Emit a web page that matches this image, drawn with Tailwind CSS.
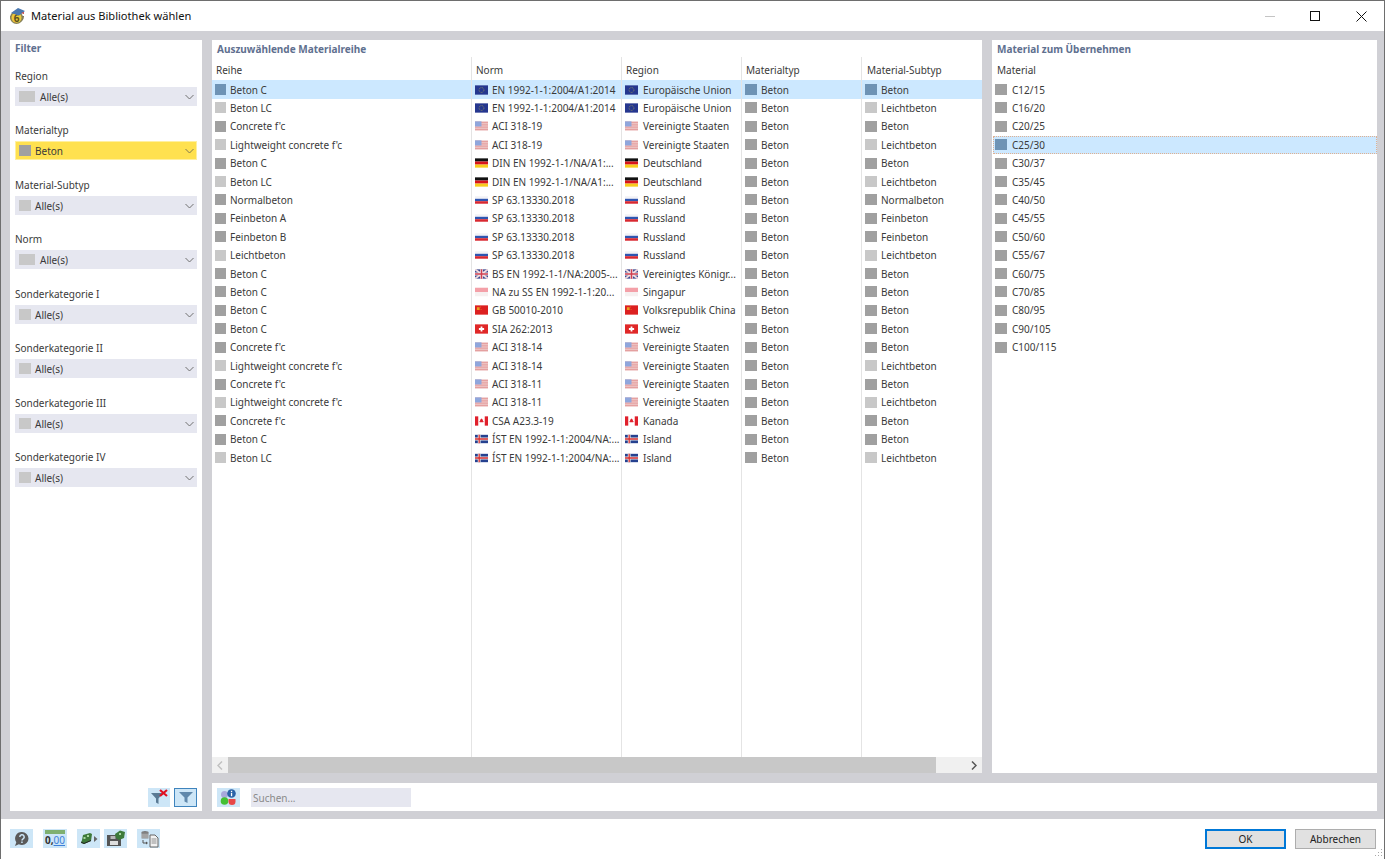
<!DOCTYPE html>
<html lang="de"><head><meta charset="utf-8"><title>Material aus Bibliothek wählen</title>
<script src="https://cdn.jsdelivr.net/npm/@tailwindcss/browser@4"></script></head>
<body class="m-0 bg-white">
<svg width="0" height="0" class="absolute">
<defs>
<symbol id="eu" viewBox="0 0 14 10"><rect width="14" height="10" fill="#26378f"/><circle cx="7" cy="5" r="2.6" fill="none" stroke="#8f9060" stroke-width=".9" stroke-dasharray="1 .8"/></symbol>
<symbol id="us" viewBox="0 0 14 10"><rect width="14" height="10" fill="#f4dcdc"/><path d="M0 1h14M0 3h14M0 5h14M0 7h14M0 9h14" stroke="#e08a8a" stroke-width="1"/><rect width="7" height="5.5" fill="#8fa6dc"/></symbol>
<symbol id="de" viewBox="0 0 14 10"><rect width="14" height="3.4" fill="#111"/><rect y="3.4" width="14" height="3.3" fill="#d8141c"/><rect y="6.7" width="14" height="3.3" fill="#f8cc1c"/></symbol>
<symbol id="ru" viewBox="0 0 14 10"><rect y="1" width="14" height="2.7" fill="#f2f2f6"/><rect y="3.7" width="14" height="2.6" fill="#2e55b0"/><rect y="6.3" width="14" height="2.7" fill="#d82830"/></symbol>
<symbol id="gb" viewBox="0 0 14 10"><rect width="14" height="10" fill="#3c4a90"/><path d="M0 0l14 10M14 0L0 10" stroke="#f0d8dc" stroke-width="2"/><path d="M7 0v10M0 5h14" stroke="#f4f0f0" stroke-width="3"/><path d="M7 0v10M0 5h14" stroke="#d04050" stroke-width="1.6"/></symbol>
<symbol id="sg" viewBox="0 0 14 10"><rect width="14" height="4.6" y=".4" fill="#f4a0a8"/><rect y="5" width="14" height="4.6" fill="#f6f0f0"/></symbol>
<symbol id="cn" viewBox="0 0 14 10"><rect width="14" height="10" fill="#dc2020"/><rect x="2" y="2" width="3" height="3" fill="#e8a020"/><circle cx="6" cy="1.8" r=".5" fill="#e8a020"/><circle cx="6.5" cy="4.5" r=".5" fill="#e8a020"/></symbol>
<symbol id="ch" viewBox="0 0 14 10"><rect width="14" height="10" fill="#e02828"/><path d="M7 2.2v5.6M4.2 5h5.6" stroke="#fff" stroke-width="1.9"/></symbol>
<symbol id="ca" viewBox="0 0 14 10"><rect width="14" height="10" fill="#fff"/><rect width="3.5" height="10" fill="#e0202c"/><rect x="10.5" width="3.5" height="10" fill="#e0202c"/><path d="M7 2l.9 1.6.8-.4-.3 2 1-.2-.5 1.4H5.1l-.5-1.4 1 .2-.3-2 .8.4z" fill="#e0202c"/></symbol>
<symbol id="is" viewBox="0 0 14 10"><rect y=".5" width="14" height="9" fill="#25418f"/><path d="M4.5 .5v9M0 5h14" stroke="#eee" stroke-width="3"/><path d="M4.5 .5v9M0 5h14" stroke="#d83030" stroke-width="1.4"/></symbol>
</defs>
</svg>

<div class="w-[1385px] h-[859px] flex flex-col overflow-hidden border-x border-t border-[#6e6e6e] font-['Noto_Sans','Open_Sans',sans-serif] text-[10px] leading-[18px] text-[#3a3a3a] relative">

<!-- title bar -->
<div class="h-[30px] shrink-0 bg-white flex items-center">
  <svg class="ml-[7px] w-[18px] h-[18px] shrink-0" viewBox="0 0 18 18"><path d="M2 9a7 7 0 1 0 14 0z" fill="#6f6a4e"/><circle cx="8.500" cy="10.500" r="6.500" fill="#8a8458"/><circle cx="8.500" cy="10.800" r="5" fill="#ecc93a"/><text x="8.500" y="14.500" font-size="10" font-weight="700" text-anchor="middle" fill="#5a5020" font-family="Noto Sans">6</text><path d="M3 6L10 1l7 3-6 4.500z" fill="#4a78b0"/><path d="M13 6l3-1v2z" fill="#c03838"/></svg>
  <div class="ml-[5px] text-[11.100px] text-[#111]">Material aus Bibliothek wählen</div>
  <div class="ml-auto flex items-center">
    <div class="w-[10px] h-px bg-[#c4c4c4] mr-[35px]"></div>
    <div class="w-[10px] h-[10px] border border-[#111] mr-[36px]"></div>
    <svg class="w-[11px] h-[11px] mr-[17px]" viewBox="0 0 11 11"><path d="M.5.5l10 10M10.500.5l-10 10" stroke="#111" stroke-width="1" fill="none"/></svg>
  </div>
</div>

<!-- gray work area -->
<div class="h-[788px] shrink-0 bg-[#d0d0d5] pt-[9px] pl-[9px] pr-[7px] pb-[8px] flex gap-[10px]">

  <!-- filter panel -->
  <div class="w-[192px] bg-white flex flex-col px-[5px] relative">
    <div class="mt-[-1px] font-bold text-[#60708f] h-[28px] leading-[18px]">Filter</div>

    <div class="h-[18px]">Region</div>
    <div class="mt-[2px] h-[19px] bg-[#e6e7f0] flex items-center">
      <span class="ml-[4px] w-[16px] h-[11px] bg-[#c8c8c8]"></span><span class="ml-[5px]">Alle(s)</span>
      <svg class="ml-auto mr-[3px] w-[9px] h-[6px]" viewBox="0 0 9 6"><path d="M.5 1l4 4 4-4" fill="none" stroke="#707070"/></svg>
    </div>

    <div class="h-[18px] mt-[15px]">Materialtyp</div>
    <div class="mt-[2px] h-[19px] bg-[#ffe14f] border border-[#fff0a0] flex items-center">
      <span class="ml-[3px] w-[12px] h-[11px] bg-[#a0a0a0]"></span><span class="ml-[4px]">Beton</span>
      <svg class="ml-auto mr-[2px] w-[9px] h-[6px]" viewBox="0 0 9 6"><path d="M.5 1l4 4 4-4" fill="none" stroke="#807850"/></svg>
    </div>

    <div class="h-[18px] mt-[16px]">Material-Subtyp</div>
    <div class="mt-[2px] h-[19px] bg-[#e6e7f0] flex items-center">
      <span class="ml-[4px] w-[12px] h-[11px] bg-[#c8c8c8]"></span><span class="ml-[4px]">Alle(s)</span>
      <svg class="ml-auto mr-[3px] w-[9px] h-[6px]" viewBox="0 0 9 6"><path d="M.5 1l4 4 4-4" fill="none" stroke="#707070"/></svg>
    </div>

    <div class="h-[18px] mt-[15px]">Norm</div>
    <div class="mt-[2px] h-[19px] bg-[#e6e7f0] flex items-center">
      <span class="ml-[4px] w-[16px] h-[11px] bg-[#c8c8c8]"></span><span class="ml-[5px]">Alle(s)</span>
      <svg class="ml-auto mr-[3px] w-[9px] h-[6px]" viewBox="0 0 9 6"><path d="M.5 1l4 4 4-4" fill="none" stroke="#707070"/></svg>
    </div>

    <div class="h-[18px] mt-[16px]">Sonderkategorie I</div>
    <div class="mt-[2px] h-[19px] bg-[#e6e7f0] flex items-center">
      <span class="ml-[4px] w-[12px] h-[11px] bg-[#c8c8c8]"></span><span class="ml-[4px]">Alle(s)</span>
      <svg class="ml-auto mr-[3px] w-[9px] h-[6px]" viewBox="0 0 9 6"><path d="M.5 1l4 4 4-4" fill="none" stroke="#707070"/></svg>
    </div>

    <div class="h-[18px] mt-[15px]">Sonderkategorie II</div>
    <div class="mt-[2px] h-[19px] bg-[#e6e7f0] flex items-center">
      <span class="ml-[4px] w-[12px] h-[11px] bg-[#c8c8c8]"></span><span class="ml-[4px]">Alle(s)</span>
      <svg class="ml-auto mr-[3px] w-[9px] h-[6px]" viewBox="0 0 9 6"><path d="M.5 1l4 4 4-4" fill="none" stroke="#707070"/></svg>
    </div>

    <div class="h-[18px] mt-[16px]">Sonderkategorie III</div>
    <div class="mt-[2px] h-[19px] bg-[#e6e7f0] flex items-center">
      <span class="ml-[4px] w-[12px] h-[11px] bg-[#c8c8c8]"></span><span class="ml-[4px]">Alle(s)</span>
      <svg class="ml-auto mr-[3px] w-[9px] h-[6px]" viewBox="0 0 9 6"><path d="M.5 1l4 4 4-4" fill="none" stroke="#707070"/></svg>
    </div>

    <div class="h-[18px] mt-[15px]">Sonderkategorie IV</div>
    <div class="mt-[2px] h-[19px] bg-[#e6e7f0] flex items-center">
      <span class="ml-[4px] w-[12px] h-[11px] bg-[#c8c8c8]"></span><span class="ml-[4px]">Alle(s)</span>
      <svg class="ml-auto mr-[3px] w-[9px] h-[6px]" viewBox="0 0 9 6"><path d="M.5 1l4 4 4-4" fill="none" stroke="#707070"/></svg>
    </div>

    <div class="mt-auto mb-[4px] flex justify-end gap-[4px]">
      <div class="w-[22px] h-[19px] bg-[#cde6f7] flex items-center justify-center">
        <svg class="w-[20px] h-[17px]" viewBox="0 0 20 17"><path d="M2 4h12L9.500 9.500V15L7 13.500V9.500z" fill="#5a7a94"/><path d="M11 1l7 6M18 1l-7 6" stroke="#e01020" stroke-width="2.200"/></svg>
      </div>
      <div class="w-[23px] h-[19px] bg-[#cde6f7] border border-[#3f84bd] flex items-center justify-center">
        <svg class="w-[16px] h-[13px]" viewBox="0 0 16 13"><path d="M1 1h14L9.500 6.500V12L6.500 10.500V6.500z" fill="#6088ab"/></svg>
      </div>
    </div>
  </div>

  <!-- center + right -->
  <div class="w-[1165px] flex flex-col gap-[10px]">
    <div class="h-[733px] flex gap-[10px]">

      <!-- material series -->
      <div class="w-[770px] bg-white flex flex-col">
        <div class="h-[17px] pl-[5px] font-bold text-[#60708f] shrink-0">Auszuwählende Materialreihe</div>
        <div class="flex-1 flex min-h-0">

          <div class="w-[260px] border-r border-[#e4e4e4] flex flex-col">
            <div class="h-[23.300px] pl-[4px] pt-[4px] shrink-0">Reihe</div>
            <div class="h-[18.420px] bg-[#cce8ff] flex items-center"><span class="ml-[3px] w-[11px] h-[11px] mr-[4px] bg-[#6e93b5]"></span>Beton C</div>
            <div class="h-[18.420px] flex items-center"><span class="ml-[3px] w-[11px] h-[11px] mr-[4px] bg-[#c8c8c8]"></span>Beton LC</div>
            <div class="h-[18.420px] flex items-center"><span class="ml-[3px] w-[11px] h-[11px] mr-[4px] bg-[#a0a0a0]"></span>Concrete f'c</div>
            <div class="h-[18.420px] flex items-center"><span class="ml-[3px] w-[11px] h-[11px] mr-[4px] bg-[#c8c8c8]"></span>Lightweight concrete f'c</div>
            <div class="h-[18.420px] flex items-center"><span class="ml-[3px] w-[11px] h-[11px] mr-[4px] bg-[#a0a0a0]"></span>Beton C</div>
            <div class="h-[18.420px] flex items-center"><span class="ml-[3px] w-[11px] h-[11px] mr-[4px] bg-[#c8c8c8]"></span>Beton LC</div>
            <div class="h-[18.420px] flex items-center"><span class="ml-[3px] w-[11px] h-[11px] mr-[4px] bg-[#a0a0a0]"></span>Normalbeton</div>
            <div class="h-[18.420px] flex items-center"><span class="ml-[3px] w-[11px] h-[11px] mr-[4px] bg-[#a0a0a0]"></span>Feinbeton A</div>
            <div class="h-[18.420px] flex items-center"><span class="ml-[3px] w-[11px] h-[11px] mr-[4px] bg-[#a0a0a0]"></span>Feinbeton B</div>
            <div class="h-[18.420px] flex items-center"><span class="ml-[3px] w-[11px] h-[11px] mr-[4px] bg-[#c8c8c8]"></span>Leichtbeton</div>
            <div class="h-[18.420px] flex items-center"><span class="ml-[3px] w-[11px] h-[11px] mr-[4px] bg-[#a0a0a0]"></span>Beton C</div>
            <div class="h-[18.420px] flex items-center"><span class="ml-[3px] w-[11px] h-[11px] mr-[4px] bg-[#a0a0a0]"></span>Beton C</div>
            <div class="h-[18.420px] flex items-center"><span class="ml-[3px] w-[11px] h-[11px] mr-[4px] bg-[#a0a0a0]"></span>Beton C</div>
            <div class="h-[18.420px] flex items-center"><span class="ml-[3px] w-[11px] h-[11px] mr-[4px] bg-[#a0a0a0]"></span>Beton C</div>
            <div class="h-[18.420px] flex items-center"><span class="ml-[3px] w-[11px] h-[11px] mr-[4px] bg-[#a0a0a0]"></span>Concrete f'c</div>
            <div class="h-[18.420px] flex items-center"><span class="ml-[3px] w-[11px] h-[11px] mr-[4px] bg-[#c8c8c8]"></span>Lightweight concrete f'c</div>
            <div class="h-[18.420px] flex items-center"><span class="ml-[3px] w-[11px] h-[11px] mr-[4px] bg-[#a0a0a0]"></span>Concrete f'c</div>
            <div class="h-[18.420px] flex items-center"><span class="ml-[3px] w-[11px] h-[11px] mr-[4px] bg-[#c8c8c8]"></span>Lightweight concrete f'c</div>
            <div class="h-[18.420px] flex items-center"><span class="ml-[3px] w-[11px] h-[11px] mr-[4px] bg-[#a0a0a0]"></span>Concrete f'c</div>
            <div class="h-[18.420px] flex items-center"><span class="ml-[3px] w-[11px] h-[11px] mr-[4px] bg-[#a0a0a0]"></span>Beton C</div>
            <div class="h-[18.420px] flex items-center"><span class="ml-[3px] w-[11px] h-[11px] mr-[4px] bg-[#c8c8c8]"></span>Beton LC</div>
          </div>

          <div class="w-[150px] border-r border-[#e4e4e4] flex flex-col">
            <div class="h-[23.300px] pl-[4px] pt-[4px] shrink-0">Norm</div>
            <div class="h-[18.420px] bg-[#cce8ff] flex items-center whitespace-nowrap"><svg class="shrink-0 ml-[3px] mr-[4px] w-[13px] h-[10px]"><use href="#eu"/></svg>EN 1992-1-1:2004/A1:2014</div>
            <div class="h-[18.420px] flex items-center whitespace-nowrap"><svg class="shrink-0 ml-[3px] mr-[4px] w-[13px] h-[10px]"><use href="#eu"/></svg>EN 1992-1-1:2004/A1:2014</div>
            <div class="h-[18.420px] flex items-center whitespace-nowrap"><svg class="shrink-0 ml-[3px] mr-[4px] w-[13px] h-[10px]"><use href="#us"/></svg>ACI 318-19</div>
            <div class="h-[18.420px] flex items-center whitespace-nowrap"><svg class="shrink-0 ml-[3px] mr-[4px] w-[13px] h-[10px]"><use href="#us"/></svg>ACI 318-19</div>
            <div class="h-[18.420px] flex items-center whitespace-nowrap"><svg class="shrink-0 ml-[3px] mr-[4px] w-[13px] h-[10px]"><use href="#de"/></svg>DIN EN 1992-1-1/NA/A1:...</div>
            <div class="h-[18.420px] flex items-center whitespace-nowrap"><svg class="shrink-0 ml-[3px] mr-[4px] w-[13px] h-[10px]"><use href="#de"/></svg>DIN EN 1992-1-1/NA/A1:...</div>
            <div class="h-[18.420px] flex items-center whitespace-nowrap"><svg class="shrink-0 ml-[3px] mr-[4px] w-[13px] h-[10px]"><use href="#ru"/></svg>SP 63.13330.2018</div>
            <div class="h-[18.420px] flex items-center whitespace-nowrap"><svg class="shrink-0 ml-[3px] mr-[4px] w-[13px] h-[10px]"><use href="#ru"/></svg>SP 63.13330.2018</div>
            <div class="h-[18.420px] flex items-center whitespace-nowrap"><svg class="shrink-0 ml-[3px] mr-[4px] w-[13px] h-[10px]"><use href="#ru"/></svg>SP 63.13330.2018</div>
            <div class="h-[18.420px] flex items-center whitespace-nowrap"><svg class="shrink-0 ml-[3px] mr-[4px] w-[13px] h-[10px]"><use href="#ru"/></svg>SP 63.13330.2018</div>
            <div class="h-[18.420px] flex items-center whitespace-nowrap"><svg class="shrink-0 ml-[3px] mr-[4px] w-[13px] h-[10px]"><use href="#gb"/></svg>BS EN 1992-1-1/NA:2005-...</div>
            <div class="h-[18.420px] flex items-center whitespace-nowrap"><svg class="shrink-0 ml-[3px] mr-[4px] w-[13px] h-[10px]"><use href="#sg"/></svg>NA zu SS EN 1992-1-1:20...</div>
            <div class="h-[18.420px] flex items-center whitespace-nowrap"><svg class="shrink-0 ml-[3px] mr-[4px] w-[13px] h-[10px]"><use href="#cn"/></svg>GB 50010-2010</div>
            <div class="h-[18.420px] flex items-center whitespace-nowrap"><svg class="shrink-0 ml-[3px] mr-[4px] w-[13px] h-[10px]"><use href="#ch"/></svg>SIA 262:2013</div>
            <div class="h-[18.420px] flex items-center whitespace-nowrap"><svg class="shrink-0 ml-[3px] mr-[4px] w-[13px] h-[10px]"><use href="#us"/></svg>ACI 318-14</div>
            <div class="h-[18.420px] flex items-center whitespace-nowrap"><svg class="shrink-0 ml-[3px] mr-[4px] w-[13px] h-[10px]"><use href="#us"/></svg>ACI 318-14</div>
            <div class="h-[18.420px] flex items-center whitespace-nowrap"><svg class="shrink-0 ml-[3px] mr-[4px] w-[13px] h-[10px]"><use href="#us"/></svg>ACI 318-11</div>
            <div class="h-[18.420px] flex items-center whitespace-nowrap"><svg class="shrink-0 ml-[3px] mr-[4px] w-[13px] h-[10px]"><use href="#us"/></svg>ACI 318-11</div>
            <div class="h-[18.420px] flex items-center whitespace-nowrap"><svg class="shrink-0 ml-[3px] mr-[4px] w-[13px] h-[10px]"><use href="#ca"/></svg>CSA A23.3-19</div>
            <div class="h-[18.420px] flex items-center whitespace-nowrap"><svg class="shrink-0 ml-[3px] mr-[4px] w-[13px] h-[10px]"><use href="#is"/></svg>ÍST EN 1992-1-1:2004/NA:...</div>
            <div class="h-[18.420px] flex items-center whitespace-nowrap"><svg class="shrink-0 ml-[3px] mr-[4px] w-[13px] h-[10px]"><use href="#is"/></svg>ÍST EN 1992-1-1:2004/NA:...</div>
          </div>

          <div class="w-[120px] border-r border-[#e4e4e4] flex flex-col">
            <div class="h-[23.300px] pl-[4px] pt-[4px] shrink-0">Region</div>
            <div class="h-[18.420px] bg-[#cce8ff] flex items-center whitespace-nowrap"><svg class="shrink-0 ml-[3px] mr-[5px] w-[13px] h-[10px]"><use href="#eu"/></svg>Europäische Union</div>
            <div class="h-[18.420px] flex items-center whitespace-nowrap"><svg class="shrink-0 ml-[3px] mr-[5px] w-[13px] h-[10px]"><use href="#eu"/></svg>Europäische Union</div>
            <div class="h-[18.420px] flex items-center whitespace-nowrap"><svg class="shrink-0 ml-[3px] mr-[5px] w-[13px] h-[10px]"><use href="#us"/></svg>Vereinigte Staaten</div>
            <div class="h-[18.420px] flex items-center whitespace-nowrap"><svg class="shrink-0 ml-[3px] mr-[5px] w-[13px] h-[10px]"><use href="#us"/></svg>Vereinigte Staaten</div>
            <div class="h-[18.420px] flex items-center whitespace-nowrap"><svg class="shrink-0 ml-[3px] mr-[5px] w-[13px] h-[10px]"><use href="#de"/></svg>Deutschland</div>
            <div class="h-[18.420px] flex items-center whitespace-nowrap"><svg class="shrink-0 ml-[3px] mr-[5px] w-[13px] h-[10px]"><use href="#de"/></svg>Deutschland</div>
            <div class="h-[18.420px] flex items-center whitespace-nowrap"><svg class="shrink-0 ml-[3px] mr-[5px] w-[13px] h-[10px]"><use href="#ru"/></svg>Russland</div>
            <div class="h-[18.420px] flex items-center whitespace-nowrap"><svg class="shrink-0 ml-[3px] mr-[5px] w-[13px] h-[10px]"><use href="#ru"/></svg>Russland</div>
            <div class="h-[18.420px] flex items-center whitespace-nowrap"><svg class="shrink-0 ml-[3px] mr-[5px] w-[13px] h-[10px]"><use href="#ru"/></svg>Russland</div>
            <div class="h-[18.420px] flex items-center whitespace-nowrap"><svg class="shrink-0 ml-[3px] mr-[5px] w-[13px] h-[10px]"><use href="#ru"/></svg>Russland</div>
            <div class="h-[18.420px] flex items-center whitespace-nowrap"><svg class="shrink-0 ml-[3px] mr-[5px] w-[13px] h-[10px]"><use href="#gb"/></svg>Vereinigtes Königr...</div>
            <div class="h-[18.420px] flex items-center whitespace-nowrap"><svg class="shrink-0 ml-[3px] mr-[5px] w-[13px] h-[10px]"><use href="#sg"/></svg>Singapur</div>
            <div class="h-[18.420px] flex items-center whitespace-nowrap"><svg class="shrink-0 ml-[3px] mr-[5px] w-[13px] h-[10px]"><use href="#cn"/></svg>Volksrepublik China</div>
            <div class="h-[18.420px] flex items-center whitespace-nowrap"><svg class="shrink-0 ml-[3px] mr-[5px] w-[13px] h-[10px]"><use href="#ch"/></svg>Schweiz</div>
            <div class="h-[18.420px] flex items-center whitespace-nowrap"><svg class="shrink-0 ml-[3px] mr-[5px] w-[13px] h-[10px]"><use href="#us"/></svg>Vereinigte Staaten</div>
            <div class="h-[18.420px] flex items-center whitespace-nowrap"><svg class="shrink-0 ml-[3px] mr-[5px] w-[13px] h-[10px]"><use href="#us"/></svg>Vereinigte Staaten</div>
            <div class="h-[18.420px] flex items-center whitespace-nowrap"><svg class="shrink-0 ml-[3px] mr-[5px] w-[13px] h-[10px]"><use href="#us"/></svg>Vereinigte Staaten</div>
            <div class="h-[18.420px] flex items-center whitespace-nowrap"><svg class="shrink-0 ml-[3px] mr-[5px] w-[13px] h-[10px]"><use href="#us"/></svg>Vereinigte Staaten</div>
            <div class="h-[18.420px] flex items-center whitespace-nowrap"><svg class="shrink-0 ml-[3px] mr-[5px] w-[13px] h-[10px]"><use href="#ca"/></svg>Kanada</div>
            <div class="h-[18.420px] flex items-center whitespace-nowrap"><svg class="shrink-0 ml-[3px] mr-[5px] w-[13px] h-[10px]"><use href="#is"/></svg>Island</div>
            <div class="h-[18.420px] flex items-center whitespace-nowrap"><svg class="shrink-0 ml-[3px] mr-[5px] w-[13px] h-[10px]"><use href="#is"/></svg>Island</div>
          </div>

          <div class="w-[120px] border-r border-[#e4e4e4] flex flex-col">
            <div class="h-[23.300px] pl-[4px] pt-[4px] shrink-0">Materialtyp</div>
            <div class="h-[18.420px] bg-[#cce8ff] flex items-center"><span class="ml-[3px] w-[12px] h-[11px] mr-[4px] bg-[#6e93b5]"></span>Beton</div>
            <div class="h-[18.420px] flex items-center"><span class="ml-[3px] w-[12px] h-[11px] mr-[4px] bg-[#a0a0a0]"></span>Beton</div>
            <div class="h-[18.420px] flex items-center"><span class="ml-[3px] w-[12px] h-[11px] mr-[4px] bg-[#a0a0a0]"></span>Beton</div>
            <div class="h-[18.420px] flex items-center"><span class="ml-[3px] w-[12px] h-[11px] mr-[4px] bg-[#a0a0a0]"></span>Beton</div>
            <div class="h-[18.420px] flex items-center"><span class="ml-[3px] w-[12px] h-[11px] mr-[4px] bg-[#a0a0a0]"></span>Beton</div>
            <div class="h-[18.420px] flex items-center"><span class="ml-[3px] w-[12px] h-[11px] mr-[4px] bg-[#a0a0a0]"></span>Beton</div>
            <div class="h-[18.420px] flex items-center"><span class="ml-[3px] w-[12px] h-[11px] mr-[4px] bg-[#a0a0a0]"></span>Beton</div>
            <div class="h-[18.420px] flex items-center"><span class="ml-[3px] w-[12px] h-[11px] mr-[4px] bg-[#a0a0a0]"></span>Beton</div>
            <div class="h-[18.420px] flex items-center"><span class="ml-[3px] w-[12px] h-[11px] mr-[4px] bg-[#a0a0a0]"></span>Beton</div>
            <div class="h-[18.420px] flex items-center"><span class="ml-[3px] w-[12px] h-[11px] mr-[4px] bg-[#a0a0a0]"></span>Beton</div>
            <div class="h-[18.420px] flex items-center"><span class="ml-[3px] w-[12px] h-[11px] mr-[4px] bg-[#a0a0a0]"></span>Beton</div>
            <div class="h-[18.420px] flex items-center"><span class="ml-[3px] w-[12px] h-[11px] mr-[4px] bg-[#a0a0a0]"></span>Beton</div>
            <div class="h-[18.420px] flex items-center"><span class="ml-[3px] w-[12px] h-[11px] mr-[4px] bg-[#a0a0a0]"></span>Beton</div>
            <div class="h-[18.420px] flex items-center"><span class="ml-[3px] w-[12px] h-[11px] mr-[4px] bg-[#a0a0a0]"></span>Beton</div>
            <div class="h-[18.420px] flex items-center"><span class="ml-[3px] w-[12px] h-[11px] mr-[4px] bg-[#a0a0a0]"></span>Beton</div>
            <div class="h-[18.420px] flex items-center"><span class="ml-[3px] w-[12px] h-[11px] mr-[4px] bg-[#a0a0a0]"></span>Beton</div>
            <div class="h-[18.420px] flex items-center"><span class="ml-[3px] w-[12px] h-[11px] mr-[4px] bg-[#a0a0a0]"></span>Beton</div>
            <div class="h-[18.420px] flex items-center"><span class="ml-[3px] w-[12px] h-[11px] mr-[4px] bg-[#a0a0a0]"></span>Beton</div>
            <div class="h-[18.420px] flex items-center"><span class="ml-[3px] w-[12px] h-[11px] mr-[4px] bg-[#a0a0a0]"></span>Beton</div>
            <div class="h-[18.420px] flex items-center"><span class="ml-[3px] w-[12px] h-[11px] mr-[4px] bg-[#a0a0a0]"></span>Beton</div>
            <div class="h-[18.420px] flex items-center"><span class="ml-[3px] w-[12px] h-[11px] mr-[4px] bg-[#a0a0a0]"></span>Beton</div>
          </div>

          <div class="w-[120px] flex flex-col">
            <div class="h-[23.300px] pl-[5px] pt-[4px] shrink-0">Material-Subtyp</div>
            <div class="h-[18.420px] bg-[#cce8ff] flex items-center"><span class="ml-[3px] w-[12px] h-[11px] mr-[4px] bg-[#6e93b5]"></span>Beton</div>
            <div class="h-[18.420px] flex items-center"><span class="ml-[3px] w-[12px] h-[11px] mr-[4px] bg-[#c8c8c8]"></span>Leichtbeton</div>
            <div class="h-[18.420px] flex items-center"><span class="ml-[3px] w-[12px] h-[11px] mr-[4px] bg-[#a0a0a0]"></span>Beton</div>
            <div class="h-[18.420px] flex items-center"><span class="ml-[3px] w-[12px] h-[11px] mr-[4px] bg-[#c8c8c8]"></span>Leichtbeton</div>
            <div class="h-[18.420px] flex items-center"><span class="ml-[3px] w-[12px] h-[11px] mr-[4px] bg-[#a0a0a0]"></span>Beton</div>
            <div class="h-[18.420px] flex items-center"><span class="ml-[3px] w-[12px] h-[11px] mr-[4px] bg-[#c8c8c8]"></span>Leichtbeton</div>
            <div class="h-[18.420px] flex items-center"><span class="ml-[3px] w-[12px] h-[11px] mr-[4px] bg-[#a0a0a0]"></span>Normalbeton</div>
            <div class="h-[18.420px] flex items-center"><span class="ml-[3px] w-[12px] h-[11px] mr-[4px] bg-[#a0a0a0]"></span>Feinbeton</div>
            <div class="h-[18.420px] flex items-center"><span class="ml-[3px] w-[12px] h-[11px] mr-[4px] bg-[#a0a0a0]"></span>Feinbeton</div>
            <div class="h-[18.420px] flex items-center"><span class="ml-[3px] w-[12px] h-[11px] mr-[4px] bg-[#c8c8c8]"></span>Leichtbeton</div>
            <div class="h-[18.420px] flex items-center"><span class="ml-[3px] w-[12px] h-[11px] mr-[4px] bg-[#a0a0a0]"></span>Beton</div>
            <div class="h-[18.420px] flex items-center"><span class="ml-[3px] w-[12px] h-[11px] mr-[4px] bg-[#a0a0a0]"></span>Beton</div>
            <div class="h-[18.420px] flex items-center"><span class="ml-[3px] w-[12px] h-[11px] mr-[4px] bg-[#a0a0a0]"></span>Beton</div>
            <div class="h-[18.420px] flex items-center"><span class="ml-[3px] w-[12px] h-[11px] mr-[4px] bg-[#a0a0a0]"></span>Beton</div>
            <div class="h-[18.420px] flex items-center"><span class="ml-[3px] w-[12px] h-[11px] mr-[4px] bg-[#a0a0a0]"></span>Beton</div>
            <div class="h-[18.420px] flex items-center"><span class="ml-[3px] w-[12px] h-[11px] mr-[4px] bg-[#c8c8c8]"></span>Leichtbeton</div>
            <div class="h-[18.420px] flex items-center"><span class="ml-[3px] w-[12px] h-[11px] mr-[4px] bg-[#a0a0a0]"></span>Beton</div>
            <div class="h-[18.420px] flex items-center"><span class="ml-[3px] w-[12px] h-[11px] mr-[4px] bg-[#c8c8c8]"></span>Leichtbeton</div>
            <div class="h-[18.420px] flex items-center"><span class="ml-[3px] w-[12px] h-[11px] mr-[4px] bg-[#a0a0a0]"></span>Beton</div>
            <div class="h-[18.420px] flex items-center"><span class="ml-[3px] w-[12px] h-[11px] mr-[4px] bg-[#a0a0a0]"></span>Beton</div>
            <div class="h-[18.420px] flex items-center"><span class="ml-[3px] w-[12px] h-[11px] mr-[4px] bg-[#c8c8c8]"></span>Leichtbeton</div>
          </div>
        </div>
        <!-- scrollbar -->
        <div class="h-[16px] bg-[#f0f0f0] flex items-center shrink-0">
          <svg class="ml-[5px] w-[6px] h-[9px]" viewBox="0 0 6 9"><path d="M5 .5l-4 4 4 4" fill="none" stroke="#c0c0c0" stroke-width="1.500"/></svg>
          <div class="ml-[5px] w-[708px] h-[16px] bg-[#c8c8c8]"></div>
          <svg class="ml-[35px] w-[6px] h-[9px]" viewBox="0 0 6 9"><path d="M1 .5l4 4-4 4" fill="none" stroke="#555" stroke-width="1.500"/></svg>
        </div>
      </div>

      <!-- material list -->
      <div class="w-[385px] bg-white flex flex-col">
        <div class="h-[17px] pl-[5px] font-bold text-[#60708f] shrink-0">Material zum Übernehmen</div>
        <div class="h-[23.300px] pl-[5px] pt-[4px] shrink-0">Material</div>
        <div class="h-[18.420px] flex items-center"><span class="ml-[3px] w-[12px] h-[11px] mr-[5px] bg-[#a0a0a0]"></span>C12/15</div>
        <div class="h-[18.420px] flex items-center"><span class="ml-[3px] w-[12px] h-[11px] mr-[5px] bg-[#a0a0a0]"></span>C16/20</div>
        <div class="h-[18.420px] flex items-center"><span class="ml-[3px] w-[12px] h-[11px] mr-[5px] bg-[#a0a0a0]"></span>C20/25</div>
        <div class="h-[18.420px] bg-[#cce8ff] outline-1 outline-dotted outline-[#e0b090] -outline-offset-1 ml-px flex items-center"><span class="ml-[2px] w-[12px] h-[11px] mr-[5px] bg-[#6e93b5]"></span>C25/30</div>
        <div class="h-[18.420px] flex items-center"><span class="ml-[3px] w-[12px] h-[11px] mr-[5px] bg-[#a0a0a0]"></span>C30/37</div>
        <div class="h-[18.420px] flex items-center"><span class="ml-[3px] w-[12px] h-[11px] mr-[5px] bg-[#a0a0a0]"></span>C35/45</div>
        <div class="h-[18.420px] flex items-center"><span class="ml-[3px] w-[12px] h-[11px] mr-[5px] bg-[#a0a0a0]"></span>C40/50</div>
        <div class="h-[18.420px] flex items-center"><span class="ml-[3px] w-[12px] h-[11px] mr-[5px] bg-[#a0a0a0]"></span>C45/55</div>
        <div class="h-[18.420px] flex items-center"><span class="ml-[3px] w-[12px] h-[11px] mr-[5px] bg-[#a0a0a0]"></span>C50/60</div>
        <div class="h-[18.420px] flex items-center"><span class="ml-[3px] w-[12px] h-[11px] mr-[5px] bg-[#a0a0a0]"></span>C55/67</div>
        <div class="h-[18.420px] flex items-center"><span class="ml-[3px] w-[12px] h-[11px] mr-[5px] bg-[#a0a0a0]"></span>C60/75</div>
        <div class="h-[18.420px] flex items-center"><span class="ml-[3px] w-[12px] h-[11px] mr-[5px] bg-[#a0a0a0]"></span>C70/85</div>
        <div class="h-[18.420px] flex items-center"><span class="ml-[3px] w-[12px] h-[11px] mr-[5px] bg-[#a0a0a0]"></span>C80/95</div>
        <div class="h-[18.420px] flex items-center"><span class="ml-[3px] w-[12px] h-[11px] mr-[5px] bg-[#a0a0a0]"></span>C90/105</div>
        <div class="h-[18.420px] flex items-center"><span class="ml-[3px] w-[12px] h-[11px] mr-[5px] bg-[#a0a0a0]"></span>C100/115</div>
      </div>
    </div>

    <!-- search bar -->
    <div class="h-[28px] bg-white flex items-center pl-[5px]">
      <div class="w-[23px] h-[19px] bg-[#cde6f7] flex items-center justify-center">
        <svg class="w-[19px] h-[17px]" viewBox="0 0 19 17"><circle cx="5.500" cy="5.500" r="3.500" fill="#a8a8dc"/><circle cx="12.500" cy="4.500" r="4.300" fill="#2a62a8"/><rect x="11.900" y="1.800" width="1.300" height="1.200" fill="#fff"/><rect x="11.900" y="3.800" width="1.300" height="3.400" fill="#fff"/><circle cx="5.500" cy="12" r="3.800" fill="#44c034"/><path d="M9.500 10h7v2.500a3.500 3.500 0 0 1-7 0z" fill="#e84848"/></svg>
      </div>
      <div class="ml-[11px] w-[160px] h-[19px] bg-[#e6e7f0] pl-[2px] text-[#8a8a8a] leading-[21px]">Suchen...</div>
    </div>
  </div>
</div>

<!-- footer -->
<div class="flex-1 bg-white flex items-start pt-[10px] pl-[9px] pr-[8px] relative">
  <div class="w-[23px] h-[19px] bg-[#cde6f7] flex items-center justify-center">
    <svg class="w-[17px] h-[16px]" viewBox="0 0 17 16"><path d="M9 1a6.500 6.500 0 0 1 0 13c-1.200 0-2.300-.3-3.200-.8L2 15l1.300-3.800A6.500 6.500 0 0 1 9 1z" fill="#5a5a5a"/><path d="M6.800 6a2.200 2.200 0 1 1 3.300 1.900c-.8.500-1.100.9-1.100 1.700" fill="none" stroke="#cde6f7" stroke-width="1.500"/><rect x="8.200" y="10.500" width="1.500" height="1.500" fill="#cde6f7"/></svg>
  </div>
  <div class="ml-[10px] w-[24px] h-[19px] bg-[#cde6f7] flex flex-col items-center">
    <div class="w-[20px] h-[4px] mt-px bg-[#7fb070] shrink-0"></div>
    <div class="text-[10px] leading-[12px] font-bold text-[#333] whitespace-nowrap">0,<span class="text-[#3d7fd8] underline font-normal">00</span></div>
  </div>
  <div class="ml-[10px] w-[23px] h-[19px] bg-[#cde6f7] flex items-center justify-center">
    <svg class="w-[19px] h-[14px]" viewBox="0 0 19 14"><path d="M4 3l7-2 2 1-1 7-7 3-3-1 1-3z" fill="#3d7a3a"/><path d="M2 10l3 1.500 7-3" stroke="#222" fill="none"/><rect x="8" y="3" width="2" height="2" fill="#a8d8a0"/><rect x="4.500" y="5" width="2" height="2" fill="#a8d8a0"/><path d="M15 4l3.500 3-3.500 3z" fill="#666"/></svg>
  </div>
  <div class="ml-[4px] w-[23px] h-[19px] bg-[#cde6f7] flex items-center justify-center">
    <svg class="w-[20px] h-[17px]" viewBox="0 0 20 17"><path d="M1 5h12l2 2v9H1z" fill="#555"/><rect x="4.500" y="6" width="5" height="3" fill="#b8b8b8"/><rect x="4" y="11" width="8" height="4" fill="#dedede"/><path d="M9 4l5-3.500 5 1.500-1 6-5 2-3-2z" fill="#3d7a3a"/><rect x="13" y="3" width="2" height="2" fill="#a8d8a0"/></svg>
  </div>
  <div class="ml-[10px] w-[23px] h-[19px] bg-[#cde6f7] flex items-center justify-center">
    <svg class="w-[20px] h-[18px]" viewBox="0 0 20 18"><ellipse cx="6" cy="2.500" rx="3.500" ry="1.500" fill="#777"/><rect x="2.500" y="2.500" width="7" height="6" fill="#8a8a8a"/><path d="M2.500 5h7M2.500 7h7" stroke="#ddd" stroke-width=".6"/><path d="M4 10v3h4" fill="none" stroke="#555"/><path d="M7 11.500l2 1.500-2 1.500z" fill="#555"/><path d="M11 5h5l3 3v9h-8z" fill="#f2f2f2" stroke="#666"/><path d="M12.500 9h5M12.500 11h5M12.500 13h5" stroke="#777" stroke-width=".8"/></svg>
  </div>
  <div class="ml-auto mr-[9px] w-[81px] h-[20px] bg-[#e1e1e1] border-2 border-[#0078d7] flex items-center justify-center text-[#222]">OK</div>
  <div class="w-[81px] h-[20px] bg-[#e1e1e1] border border-[#adadad] flex items-center justify-center text-[#222]">Abbrechen</div>
  <svg class="absolute right-[1px] bottom-[1px] w-[10px] h-[10px]" viewBox="0 0 10 10"><path d="M8 1h1v1H8zM8 4h1v1H8zM5 4h1v1H5zM8 7h1v1H8zM5 7h1v1H5zM2 7h1v1H2z" fill="#a8a8a8"/></svg>
</div>

</div>
</body></html>
